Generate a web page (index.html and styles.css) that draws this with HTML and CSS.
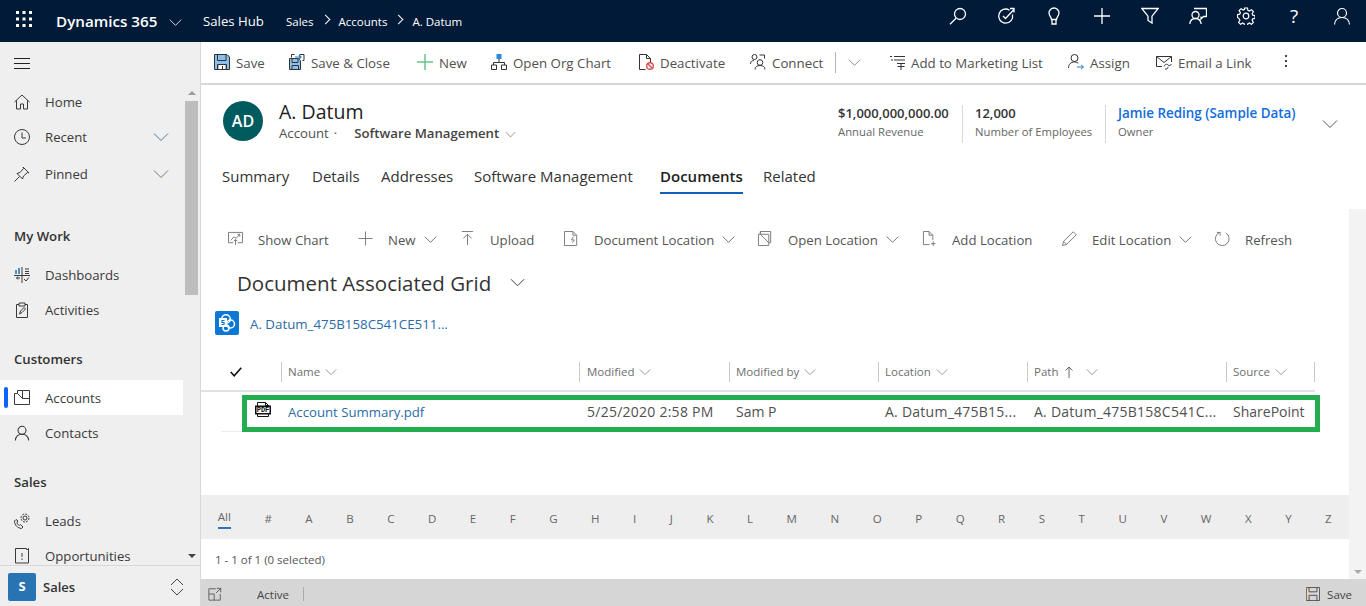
FILE: index.html
```html
<!doctype html>
<html lang="en">
<head>
    <meta charset="UTF-8">
    <title>A. Datum - Dynamics 365</title>
    <link rel="stylesheet" href="styles.css">
</head>
<body>

<svg class="sprite" xmlns="http://www.w3.org/2000/svg">
    <symbol id="chev" viewBox="0 0 16 16"><path d="M1 4.500l7 7 7-7" fill="none" stroke="currentColor"/></symbol>
    <symbol id="waffle" viewBox="0 0 16 16"><path d="M0 0h3v3H0zM6.500 0h3v3h-3zM13 0h3v3h-3zM0 6.500h3v3H0zM6.500 6.500h3v3h-3zM13 6.500h3v3h-3zM0 13h3v3H0zM6.500 13h3v3h-3zM13 13h3v3h-3z" fill="currentColor"/></symbol>
    <symbol id="search" viewBox="0 0 18 18"><g fill="none" stroke="currentColor" stroke-width="1.300"><circle cx="11" cy="7" r="5.500"/><path d="M7 11.200L1 17.200"/></g></symbol>
    <symbol id="task" viewBox="0 0 18 18"><g fill="none" stroke="currentColor" stroke-width="1.300"><path d="M12.500 3.200A7 7 0 1 0 15.500 7.500"/><path d="M6 9l2.500 2.500L17 2.500M13 1.500h4v4"/></g></symbol>
    <symbol id="bulb" viewBox="0 0 18 18"><g fill="none" stroke="currentColor" stroke-width="1.300"><path d="M6.500 12.500C6.500 10 4 9 4 6a5 5 0 0 1 10 0c0 3-2.500 4-2.500 6.500zM7 12.500v4.500h4v-4.500"/></g></symbol>
    <symbol id="plus" viewBox="0 0 18 18"><path d="M9 1v16M1 9h16" fill="none" stroke="currentColor" stroke-width="1.300"/></symbol>
    <symbol id="funnel" viewBox="0 0 18 18"><path d="M.8 1.500h16.400L11 9.200V16l-4-2.500V9.200z" fill="none" stroke="currentColor" stroke-width="1.300"/></symbol>
    <symbol id="assistant" viewBox="0 0 18 18"><g fill="none" stroke="currentColor" stroke-width="1.300"><circle cx="6.500" cy="8" r="3.500"/><path d="M.8 17c.3-3.500 2.700-5.500 5.700-5.500s5.200 2 5.700 5.500M5 1.500h12.500v8h-3l-2.500 2.500V9.500"/></g></symbol>
    <symbol id="gear" viewBox="0 0 18 18"><g fill="none" stroke="currentColor" stroke-width="1.200"><circle cx="9" cy="9" r="2.800"/><path d="M7.500 1h3l.4 2.300 1.500.7 2-1.300 2 2-1.300 2 .7 1.500 2.200.4v2.800l-2.200.4-.7 1.500 1.300 2-2 2-2-1.300-1.500.7-.4 2.200h-3l-.4-2.200-1.500-.7-2 1.300-2-2 1.300-2-.7-1.500L.5 10.400V7.600l2.200-.4.7-1.500-1.300-2 2-2 2 1.300 1.500-.7z"/></g></symbol>
    <symbol id="person" viewBox="0 0 18 18"><g fill="none" stroke="currentColor" stroke-width="1.200"><circle cx="9" cy="6" r="4.500"/><path d="M1.500 17.500c.4-4.500 3.500-7 7.500-7s7.100 2.500 7.500 7"/></g></symbol>
    <symbol id="home" viewBox="0 0 16 16"><path d="M.5 8L8 1l7.500 7M2.500 6.500v8.500h4v-5h3v5h4V6.500" fill="none" stroke="currentColor"/></symbol>
    <symbol id="clock" viewBox="0 0 16 16"><g fill="none" stroke="currentColor"><circle cx="8" cy="8" r="7.500"/><path d="M8 3.500V9h4"/></g></symbol>
    <symbol id="pin" viewBox="0 0 16 16"><path d="M.5 15.500l5-5M3 7.500l3-1 3.500-4 -.5-1.500 6 6-1.500-.5-4 3.500-1 3z" fill="none" stroke="currentColor"/></symbol>
    <symbol id="dash" viewBox="0 0 16 16"><g fill="none" stroke="currentColor"><path d="M0 8.500h16M8 0v16"/><path d="M11 2h4M11 4.500h4M11 6.500h4M10 12l2 2 3-3.500" /></g><path d="M1 3h2v4H1zM4 1h2v6H4z" fill="#4a90c8"/><path d="M6 11H2.500l1.500-1.500M2.500 11L4 12.500" fill="none" stroke="currentColor"/></symbol>
    <symbol id="clipboard" viewBox="0 0 16 16"><g fill="none" stroke="currentColor"><path d="M5 2.500H2.500v13h11v-13H11M5 1h6v3H5zM5.500 12l1-3L10 5.500l1.500 1.500L8 10.500z"/></g></symbol>
    <symbol id="account" viewBox="0 0 16 16"><path d="M.5 3.500h3l5 5v-8h7v14H.5zM3.500 .5h5M3.500 .5v3M8.500 8.500h7" fill="none" stroke="currentColor"/></symbol>
    <symbol id="leads" viewBox="0 0 16 16"><g fill="none" stroke="currentColor"><path d="M2 6.500L.5 8c0 4 3 7 7 7.500L9 14l-2.500-2.500-1 1C4 12 3 10.500 3 9l1-1z"/><circle cx="11" cy="5" r="2"/><circle cx="11" cy="5" r="4" stroke-dasharray="2 1.100"/></g></symbol>
    <symbol id="opportunity" viewBox="0 0 16 16"><path d="M1.500.5h11v1h2v-1 14.500h-13zM8 5v4M8 10.500v1.500" fill="none" stroke="currentColor"/></symbol>
    <symbol id="updown" viewBox="0 0 16 16"><path d="M2 6l6-6 6 6M2 10l6 6 6-6" fill="none" stroke="currentColor"/></symbol>
    <symbol id="save" viewBox="0 0 16 16"><path d="M1 1h14v14H1z" fill="#8cc0ea"/><path d="M5 11h6v4H5z" fill="#fff"/><path d="M.5.500h12.500l2.500 2.500v12.500H.5zM3.500 .5v6h8.500v-6M3.500 15.500v-5h9v5M8.500 12v3.500" fill="none" stroke="#333"/></symbol>
    <symbol id="saveclose" viewBox="0 0 16 16"><path d="M1 5h10v10H1z" fill="#8cc0ea"/><path d="M.5 4.500h9l2 2v9H.5zM3 4.500v4h6v-4M3 15.500v-4h6.500v4" fill="none" stroke="#333"/><path d="M5.500 .5h-3v3M10.500 .5h4.500v6h-1.500" fill="none" stroke="#333"/><path d="M6 3h6M10 1l2 2-2 2" fill="none" stroke="#2a79c4" stroke-width="1.200"/></symbol>
    <symbol id="neww" viewBox="0 0 16 16"><path d="M8 0v16M0 8h16" stroke="#67c68c" stroke-width="1.500"/></symbol>
    <symbol id="org" viewBox="0 0 16 16"><path d="M5.500 0h5v5h-5z" fill="#2b88d8"/><path d="M8 5v3.500M2.500 11V8.500h11V11M.5 11h5v4.500h-5zM10.500 11h5v4.500h-5z" fill="none" stroke="#333"/></symbol>
    <symbol id="deact" viewBox="0 0 16 16"><path d="M7.500 15.500H1.500V.5h7l4 4v4.500M8.500.5v4h4" fill="none" stroke="#333"/><circle cx="12" cy="12" r="3.300" fill="none" stroke="#d9534f" stroke-width="1.400"/><path d="M9.800 9.800l4.400 4.400" stroke="#d9534f" stroke-width="1.400"/></symbol>
    <symbol id="connect" viewBox="0 0 16 16"><g fill="none" stroke="#333"><circle cx="4.500" cy="3" r="2.500"/><circle cx="10" cy="8.500" r="2.800"/><path d="M.5 10c0-2 1-3.500 3.500-3.500M5 15.500c0-2.500 2-4 5-4s5 1.500 5 4M9.500 1h5v3.500"/></g></symbol>
    <symbol id="addlist" viewBox="0 0 16 16"><path d="M5 2.500h11M5 6h11M8 9.500h8M12 9v7M8.500 12.500h7M1 2.500h2M2 6h2" fill="none" stroke="#333"/></symbol>
    <symbol id="assign" viewBox="0 0 16 16"><g fill="none" stroke="#333"><circle cx="6.500" cy="4" r="3.500"/><path d="M.5 14c0-4 2.500-6 6-6 1.500 0 2.800.4 3.800 1.200"/></g><path d="M9 13h6.500M13 10.800l2.400 2.200-2.400 2.200" fill="none" stroke="#2a79c4"/></symbol>
    <symbol id="email" viewBox="0 0 16 16"><g fill="none" stroke="#333"><path d="M6 12.500H.5V2.500h15V8M.5 2.500L8 8.500l7.500-6"/><path d="M8 12.500c1-2.500 3-3 4-1.500s3 0 3.500-1M9 15c1.500.5 3-.5 3-2" /></g></symbol>
    <symbol id="chart" viewBox="0 0 16 16"><path d="M5.500 12.500h-5v-11h15v11h-5M3 10l3.500-4 2 2 4-4.500M10 3.500h2.500V6M8 15V9M6 11l2-2 2 2" fill="none" stroke="currentColor"/></symbol>
    <symbol id="thinplus" viewBox="0 0 16 16"><path d="M8 .5v15M.5 8h15" fill="none" stroke="currentColor"/></symbol>
    <symbol id="upload" viewBox="0 0 16 16"><path d="M2 .5h12M8 15V3.500M3.500 8L8 3.500 12.500 8" fill="none" stroke="currentColor"/></symbol>
    <symbol id="docloc" viewBox="0 0 16 16"><path d="M.5.500h9l4 4v11H.5zM9.500.5v4h4M10 6l-2 3.500h3l-2 3" fill="none" stroke="currentColor"/></symbol>
    <symbol id="openloc" viewBox="0 0 16 16"><path d="M.5 3.500h2v-3h11v12h-2v3H.5zM2.500 3.500l9 9M11.500 3.500v9M2.500 .5v3h9" fill="none" stroke="currentColor"/></symbol>
    <symbol id="addloc" viewBox="0 0 16 16"><path d="M8 14.500H1.500V.5h6l4 4v5M7.500.5v4h4M12 11v5M9.500 13.500h5" fill="none" stroke="currentColor"/></symbol>
    <symbol id="pencil" viewBox="0 0 16 16"><path d="M.5 15.500l1.200-4.500L12 .8 15.200 4 5 14.300zM1.700 11L5 14.300" fill="none" stroke="currentColor"/></symbol>
    <symbol id="refresh" viewBox="0 0 16 16"><path d="M5 1.500A7.300 7.300 0 1 0 11.500 2M5.500 5V1.500H2" fill="none" stroke="currentColor"/></symbol>
    <symbol id="check" viewBox="0 0 12 10"><path d="M.7 5l3.500 3.800L11.300.8" fill="none" stroke="currentColor" stroke-width="1.600"/></symbol>
    <symbol id="sortup" viewBox="0 0 10 12"><path d="M5 12V1M1.500 4.500L5 1l3.500 3.500" fill="none" stroke="currentColor"/></symbol>
    <symbol id="sharepoint" viewBox="0 0 24 24"><rect width="24" height="24" rx="2" fill="#0d78d4"/><circle cx="11" cy="8" r="4.300" fill="none" stroke="#fff" stroke-width="1.500"/><circle cx="15.500" cy="13" r="4" fill="none" stroke="#fff" stroke-width="1.500"/><circle cx="11" cy="17" r="3" fill="none" stroke="#fff" stroke-width="1.500"/><path d="M4 7h8v9H4z" fill="#fff"/><path d="M9.500 9.500H7v2h2v2H6.500" fill="none" stroke="#0d78d4" stroke-width="1.200"/></symbol>
    <symbol id="expand" viewBox="0 0 16 16"><path d="M9 2H1v13h13V8M1 8h6v7M9 7l5.500-5.500M10 1.500h4.500V6" fill="none" stroke="currentColor"/></symbol>
    <symbol id="savesmall" viewBox="0 0 16 16"><path d="M.5.500h15v15H.5zM3.500.5v5h9v-5M3.500 15.500v-6h9v6" fill="none" stroke="#444"/><path d="M.5.500v15" stroke="#a9752c"/></symbol>
</svg>

<header class="topbar">
    <svg class="waffle"><use href="#waffle"/></svg>
    <span class="brand">Dynamics 365</span>
    <svg class="brand-chev"><use href="#chev"/></svg>
    <span class="app-name">Sales Hub</span>
    <nav class="crumbs">
        <span>Sales</span><i class="crumb-sep"></i>
        <span>Accounts</span><i class="crumb-sep"></i>
        <span>A. Datum</span>
    </nav>
    <div class="top-icons">
        <span class="top-icon"><svg><use href="#search"/></svg></span>
        <span class="top-icon"><svg><use href="#task"/></svg></span>
        <span class="top-icon"><svg><use href="#bulb"/></svg></span>
        <span class="top-icon"><svg><use href="#plus"/></svg></span>
        <span class="top-icon"><svg><use href="#funnel"/></svg></span>
        <span class="top-icon"><svg><use href="#assistant"/></svg></span>
        <span class="top-icon"><svg><use href="#gear"/></svg></span>
        <span class="top-icon help">?</span>
        <span class="top-icon"><svg><use href="#person"/></svg></span>
    </div>
</header>

<div class="app">

    <aside class="sidebar">
        <div class="burger"><i></i><i></i><i></i></div>
        <div class="side-scroll">
            <nav class="side-list">
                <a class="side-item home-row"><svg><use href="#home"/></svg>Home</a>
                <a class="side-item recent-row"><svg><use href="#clock"/></svg>Recent<svg class="side-chev recent-chev"><use href="#chev"/></svg></a>
                <a class="side-item pinned-row"><svg><use href="#pin"/></svg>Pinned<svg class="side-chev pinned-chev"><use href="#chev"/></svg></a>

                <h3 class="side-head first">My Work</h3>
                <a class="side-item"><svg><use href="#dash"/></svg>Dashboards</a>
                <a class="side-item"><svg><use href="#clipboard"/></svg>Activities</a>

                <h3 class="side-head">Customers</h3>
                <a class="side-item active"><svg><use href="#account"/></svg>Accounts</a>
                <a class="side-item"><svg><use href="#person"/></svg>Contacts</a>

                <h3 class="side-head">Sales</h3>
                <a class="side-item"><svg><use href="#leads"/></svg>Leads</a>
                <a class="side-item"><svg><use href="#opportunity"/></svg>Opportunities</a>
            </nav>
            <div class="side-bar">
                <i class="arrow-up"></i>
                <i class="side-thumb"></i>
                <i class="arrow-down"></i>
            </div>
        </div>
        <div class="area-switch">
            <span class="area-tile">S</span>
            <span class="area-name">Sales</span>
            <svg class="area-arrows"><use href="#updown"/></svg>
        </div>
    </aside>

    <main class="main">

        <div class="commands">
            <a class="cmd"><svg><use href="#save"/></svg>Save</a>
            <a class="cmd"><svg><use href="#saveclose"/></svg>Save &amp; Close</a>
            <a class="cmd"><svg><use href="#neww"/></svg>New</a>
            <a class="cmd"><svg><use href="#org"/></svg>Open Org Chart</a>
            <a class="cmd"><svg><use href="#deact"/></svg>Deactivate</a>
            <a class="cmd"><svg><use href="#connect"/></svg>Connect</a>
            <a class="cmd cmd-split"><svg class="cmd-chev"><use href="#chev"/></svg></a>
            <a class="cmd"><svg><use href="#addlist"/></svg>Add to Marketing List</a>
            <a class="cmd"><svg><use href="#assign"/></svg>Assign</a>
            <a class="cmd"><svg><use href="#email"/></svg>Email a Link</a>
            <a class="cmd-more"><i></i><i></i><i></i></a>
        </div>

        <section class="record">
            <div class="avatar">AD</div>
            <div class="record-title">
                <h1>A. Datum</h1>
                <p><span>Account</span><span class="dot">·</span><b>Software Management</b><svg class="form-chev"><use href="#chev"/></svg></p>
            </div>
            <div class="kpis">
                <div class="kpi kpi-money"><strong>$1,000,000,000.00</strong><span>Annual Revenue</span></div>
                <div class="kpi kpi-staff"><strong>12,000</strong><span>Number of Employees</span></div>
                <div class="kpi kpi-owner"><strong class="owner">Jamie Reding (Sample Data)</strong><span>Owner</span></div>
            </div>
            <svg class="record-chev"><use href="#chev"/></svg>
        </section>

        <nav class="tabs">
            <a>Summary</a>
            <a>Details</a>
            <a>Addresses</a>
            <a>Software Management</a>
            <a class="tab-on"><span>Documents</span></a>
            <a>Related</a>
        </nav>

        <section class="content">
            <div class="pane">
                <div class="grid-tools">
                    <a class="tool"><svg><use href="#chart"/></svg><span>Show Chart</span></a>
                    <a class="tool"><svg><use href="#thinplus"/></svg><span>New</span><svg class="tool-chev"><use href="#chev"/></svg></a>
                    <a class="tool"><svg><use href="#upload"/></svg><span>Upload</span></a>
                    <a class="tool"><svg><use href="#docloc"/></svg><span>Document Location</span><svg class="tool-chev"><use href="#chev"/></svg></a>
                    <a class="tool"><svg><use href="#openloc"/></svg><span>Open Location</span><svg class="tool-chev"><use href="#chev"/></svg></a>
                    <a class="tool"><svg><use href="#addloc"/></svg><span>Add Location</span></a>
                    <a class="tool"><svg><use href="#pencil"/></svg><span>Edit Location</span><svg class="tool-chev"><use href="#chev"/></svg></a>
                    <a class="tool"><svg><use href="#refresh"/></svg><span>Refresh</span></a>
                </div>

                <div class="view-title">
                    <h2>Document Associated Grid</h2>
                    <svg><use href="#chev"/></svg>
                </div>

                <div class="site-link">
                    <svg><use href="#sharepoint"/></svg>
                    <a>A. Datum_475B158C541CE511...</a>
                </div>

                <div class="list-head">
                    <div class="list-check"><svg><use href="#check"/></svg></div>
                    <div class="col">Name<svg><use href="#chev"/></svg></div>
                    <div class="col col-date">Modified<svg><use href="#chev"/></svg></div>
                    <div class="col">Modified by<svg><use href="#chev"/></svg></div>
                    <div class="col">Location<svg><use href="#chev"/></svg></div>
                    <div class="col">Path<svg class="sort-up"><use href="#sortup"/></svg><svg class="path-chev"><use href="#chev"/></svg></div>
                    <div class="col col-last">Source<svg><use href="#chev"/></svg></div>
                </div>

                <div class="list-row">
                    <div class="file-icon">
                        <svg width="16" height="15" viewBox="0 0 16 15"><path d="M2.500 4V.5h8l3 3V4M10.500.5v3h3M2.500 12v2.500h11V12" fill="none" stroke="#111"/><rect x=".75" y="4.250" width="14.500" height="7.500" fill="#fff" stroke="#111" stroke-width="1.500"/></svg>
                        <b>PDF</b>
                    </div>
                    <a class="cell file-name">Account Summary.pdf</a>
                    <div class="cell cell-date">5/25/2020 2:58 PM</div>
                    <div class="cell">Sam P</div>
                    <div class="cell cell-long">A. Datum_475B15...</div>
                    <div class="cell cell-long">A. Datum_475B158C541C...</div>
                    <div class="cell">SharePoint</div>
                    <div class="highlight"></div>
                </div>

                <div class="pane-fill"></div>

                <div class="jump">
                    <a class="jump-on"><span>All</span></a>
                    <a>#</a><a>A</a><a>B</a><a>C</a><a>D</a><a>E</a><a>F</a><a>G</a><a>H</a><a>I</a><a>J</a><a>K</a><a>L</a><a>M</a><a>N</a><a>O</a><a>P</a><a>Q</a><a>R</a><a>S</a><a>T</a><a>U</a><a>V</a><a>W</a><a>X</a><a>Y</a><a>Z</a>
                </div>
                <div class="count">1 - 1 of 1 (0 selected)</div>
            </div>
            <div class="pane-bar"><i class="arrow-down"></i></div>
        </section>

        <footer class="status">
            <svg class="status-expand"><use href="#expand"/></svg>
            <span class="status-text">Active</span>
            <i class="status-sep"></i>
            <svg class="status-save"><use href="#savesmall"/></svg>
            <span class="status-savetext">Save</span>
        </footer>

    </main>
</div>

</body>
</html>
```

FILE: styles.css
```css
html,body{
    margin:0;
    padding:0;
    height:100%;
    overflow:hidden;
}
body{
    display:flex;
    flex-direction:column;
    font-family:"Open Sans","Noto Sans",sans-serif;
    font-size:13px;
    color:#333;
}
a{
    color:inherit;
    text-decoration:none;
}
i{
    font-style:normal;
}
.sprite{
    display:none;
}

/* top bar */
.topbar{
    height:42px;
    flex:none;
    display:flex;
    align-items:center;
    background:#001a38;
    color:#fff;
    white-space:nowrap;
}
.waffle{
    width:16px;
    height:16px;
    margin:-5px 24px 0 16px;
}
.brand{
    font-size:15.200px;
    font-weight:600;
    width:101px;
}
.brand-chev{
    width:13px;
    height:13px;
    margin:2px 21px 0 12px;
}
.app-name{
    font-size:13.200px;
    width:83px;
}
.crumbs{
    display:flex;
    align-items:center;
    font-size:11.500px;
}
.crumb-sep{
    width:6px;
    height:6px;
    border-top:1px solid #fff;
    border-right:1px solid #fff;
    transform:rotate(45deg);
    margin:-3px 10px 0 8px;
}
.top-icons{
    margin-left:auto;
    display:flex;
}
.top-icon{
    width:48px;
    height:32px;
    margin-top:-10px;
    display:flex;
    align-items:center;
    justify-content:center;
}
.top-icon svg{
    width:18px;
    height:18px;
}
.help{
    font-size:19px;
}

.app{
    flex:1;
    display:flex;
    min-height:0;
}

/* left nav */
.sidebar{
    width:200px;
    flex:none;
    display:flex;
    flex-direction:column;
    background:#efefef;
    border-right:1px solid #d8d8d8;
}
.burger{
    height:43px;
    flex:none;
    padding-left:14px;
    display:flex;
    flex-direction:column;
    justify-content:center;
    gap:4px;
}
.burger i{
    width:16px;
    height:1px;
    background:#222;
}
.side-scroll{
    flex:1;
    min-height:0;
    display:flex;
    overflow:hidden;
}
.side-list{
    width:183px;
    flex:none;
}
.side-item{
    height:35px;
    display:flex;
    align-items:center;
    padding-left:14px;
    gap:15px;
    font-size:13.200px;
    white-space:nowrap;
    color:#3a3a3a;
}
.side-item svg{
    width:16px;
    height:16px;
    flex:none;
}
.home-row{
    height:34px;
}
.recent-row{
    height:36px;
}
.pinned-row{
    height:38px;
}
.side-item .side-chev{
    margin-left:auto;
    margin-right:14px;
}
.recent-chev{
    color:#4f7b98;
}
.pinned-chev{
    color:#8c7657;
}
.side-head{
    height:34px;
    line-height:34px;
    margin:15px 0 4px;
    padding-left:14px;
    font-size:13.200px;
    font-weight:600;
    color:#333;
}
.side-head.first{
    margin-top:26px;
}
.active{
    position:relative;
    background:#fff;
}
.active::before{
    content:"";
    position:absolute;
    left:4px;
    top:7px;
    width:4px;
    height:21px;
    border-radius:2px;
    background:#0f62fe;
}
.side-bar{
    width:13px;
    margin-left:2px;
    display:flex;
    flex-direction:column;
    align-items:center;
}
.arrow-up{
    width:0;
    height:0;
    margin:6px 0 6px;
    border:4px solid transparent;
    border-top:0;
    border-bottom:4px solid #9a9a9a;
}
.side-thumb{
    width:13px;
    height:194px;
    flex:none;
    background:#bdbdbd;
}
.arrow-down{
    width:0;
    height:0;
    margin-top:auto;
    margin-bottom:7px;
    border:4px solid transparent;
    border-bottom:0;
    border-top:4px solid #444;
}
.area-switch{
    height:41px;
    flex:none;
    display:flex;
    align-items:center;
    padding:2px 0 0 8px;
    border-top:1px solid #d8d8d8;
    box-sizing:border-box;
}
.area-tile{
    width:28px;
    height:28px;
    line-height:26px;
    border-radius:2px;
    background:#2a73b2;
    color:#fff;
    text-align:center;
    font-weight:700;
    font-size:13px;
}
.area-name{
    margin-left:7px;
    font-weight:600;
    font-size:13px;
    color:#333;
}
.area-arrows{
    width:16px;
    height:16px;
    margin-left:auto;
    margin-right:15px;
    color:#444;
}

/* main column */
.main{
    flex:1;
    min-width:0;
    display:flex;
    flex-direction:column;
}
.commands{
    height:41px;
    flex:none;
    display:grid;
    grid-template-columns:75px 128px 74px 147px 112px 85px 54px 179px 88px 124px 12px;
    padding-left:13px;
    align-items:center;
    border-bottom:2px solid #d8d8d8;
    font-size:13.300px;
    color:#505050;
    white-space:nowrap;
}
.cmd{
    display:flex;
    align-items:center;
    gap:6px;
    padding-top:1px;
}
.cmd svg{
    width:16px;
    height:16px;
    flex:none;
    margin-top:-3px;
}
.cmd-split{
    height:21px;
    padding:0;
    border-left:1px solid #b4b4b4;
    box-sizing:border-box;
    padding-left:12px;
}
.cmd .cmd-chev{
    width:13px;
    height:13px;
    margin-top:0;
    color:#777;
}
.cmd-more{
    display:flex;
    flex-direction:column;
    gap:3px;
    align-items:center;
    margin-top:-3px;
}
.cmd-more i{
    width:2px;
    height:2px;
    background:#444;
}

/* record header */
.record{
    height:80px;
    flex:none;
    display:flex;
    padding:16px 0 0 22px;
    box-sizing:border-box;
}
.avatar{
    width:40px;
    height:40px;
    border-radius:50%;
    background:#005b5e;
    color:#fff;
    font-size:16px;
    font-weight:600;
    line-height:40px;
    text-align:center;
    flex:none;
}
.record-title{
    margin-left:16px;
    width:559px;
    flex:none;
}
.record-title h1{
    margin:-1px 0 0;
    font-size:19.500px;
    line-height:23px;
    font-weight:500;
    color:#222;
}
.record-title p{
    margin:0;
    height:20px;
    line-height:19px;
    display:flex;
    align-items:center;
    font-size:13.200px;
    color:#505050;
}
.dot{
    margin:0 17px 0 5px;
}
.record-title b{
    font-weight:600;
    color:#444;
}
.form-chev{
    width:11px;
    height:11px;
    margin:2px 0 0 6px;
    color:#666;
}
.kpis{
    display:flex;
    margin-top:4px;
    height:38px;
}
.kpi{
    display:flex;
    flex-direction:column;
    white-space:nowrap;
}
.kpi strong{
    font-size:13px;
    font-weight:600;
    line-height:17px;
    color:#333;
}
.kpi span{
    margin-top:1px;
    font-size:11.300px;
    line-height:17px;
    color:#666;
}
.kpi-money{
    width:124px;
}
.kpi-staff,.kpi-owner{
    border-left:1px solid #d8d8d8;
    padding-left:12px;
}
.kpi-staff{
    width:130px;
}
.kpi-owner{
    width:208px;
}
.kpi .owner{
    font-size:13.400px;
    color:#0f6cde;
}
.record-chev{
    width:16px;
    height:16px;
    margin:15px 0 0 -4px;
    color:#555;
}

/* tabs */
.tabs{
    height:29px;
    flex:none;
    display:grid;
    grid-template-columns:90px 69px 93px 186px 103px 80px;
    padding-left:21px;
    font-size:15px;
    line-height:23px;
    color:#333;
    white-space:nowrap;
}
.tab-on span{
    display:inline-block;
    height:27px;
    border-bottom:2px solid #1160b7;
    font-weight:600;
    color:#222;
}

/* documents area */
.content{
    flex:1;
    min-height:0;
    margin-top:15px;
    display:flex;
}
.pane{
    flex:1;
    min-width:0;
    display:flex;
    flex-direction:column;
    position:relative;
}
.pane-bar{
    width:17px;
    flex:none;
    background:#f3f3f3;
    display:flex;
    flex-direction:column;
    align-items:center;
}
.pane-bar .arrow-down{
    border-top-color:#aaa;
    margin-bottom:5px;
}
.grid-tools{
    height:31px;
    margin-top:15px;
    flex:none;
    display:grid;
    grid-template-columns:130px 102px 104px 194px 164px 140px 153px 90px;
    padding-left:27px;
    align-items:center;
    font-size:13.200px;
    color:#555;
    white-space:nowrap;
}
.tool{
    display:flex;
    align-items:center;
}
.tool svg{
    width:15px;
    height:15px;
    flex:none;
    margin-right:15px;
    margin-top:-3px;
    color:#777;
}
.tool .tool-chev{
    width:13px;
    height:13px;
    margin:0 0 0 8px;
    color:#555;
}
.view-title{
    height:40px;
    margin-top:8px;
    flex:none;
    display:flex;
    align-items:center;
    padding-left:36px;
}
.view-title h2{
    margin:0;
    font-size:20.500px;
    font-weight:500;
    color:#333;
    width:273px;
    white-space:nowrap;
}
.view-title svg{
    width:15px;
    height:15px;
    margin-top:-2px;
    color:#333;
}
.site-link{
    height:24px;
    margin-top:8px;
    flex:none;
    display:flex;
    align-items:center;
    padding-left:14px;
    gap:11px;
    font-size:13.300px;
    color:#2b6ca8;
    white-space:nowrap;
}
.site-link svg{
    width:24px;
    height:24px;
}
.site-link a{
    margin-top:2px;
}
.list-head{
    margin-top:21px;
    height:36px;
    flex:none;
    width:1114px;
    box-sizing:border-box;
    padding:6px 0 8px 20px;
    display:grid;
    grid-template-columns:60px 298px 150px 149px 149px 199px 89px;
    border-bottom:2px solid #e1e1e1;
    font-size:11.500px;
    color:#6e6e6e;
}
.list-check{
    display:flex;
    align-items:center;
    padding-left:9px;
    color:#111;
}
.list-check svg{
    width:12px;
    height:10px;
}
.col{
    display:flex;
    align-items:center;
    border-left:1px solid #c8c8c8;
    padding:0 0 1px 6px;
    white-space:nowrap;
}
.col-date{
    padding-left:7px;
}
.col svg{
    width:12px;
    height:12px;
    margin-left:5px;
    color:#777;
}
.col-last{
    border-right:1px solid #c8c8c8;
}
.col .sort-up{
    width:10px;
    margin-left:6px;
    color:#666;
}
.col .path-chev{
    margin-left:12px;
}
.list-row{
    position:relative;
    height:40px;
    flex:none;
    width:1094px;
    margin-left:20px;
    box-sizing:border-box;
    border-bottom:1px solid #ebebeb;
    display:grid;
    grid-template-columns:60px 298px 150px 149px 149px 199px 89px;
    align-items:center;
    font-size:14px;
    color:#505050;
    white-space:nowrap;
}
.cell{
    padding-left:7px;
}
.file-name{
    font-size:13.200px;
    color:#2b6ca8;
}
.cell-date{
    padding-left:8px;
    letter-spacing:.25px;
}
.cell-long{
    letter-spacing:.25px;
}
.file-icon{
    position:relative;
    width:16px;
    height:15px;
    margin:-5px 0 0 34px;
    color:#111;
}
.file-icon svg{
    display:block;
}
.file-icon b{
    position:absolute;
    left:1px;
    top:4px;
    width:14px;
    text-align:center;
    font:700 7px/8px "Liberation Mono",monospace;
}
.highlight{
    position:absolute;
    left:21px;
    top:3px;
    width:1078px;
    height:37px;
    box-sizing:border-box;
    border:5px solid #22ad50;
}
.pane-fill{
    flex:1;
}
.jump{
    height:44px;
    flex:none;
    background:#eee;
    display:flex;
    align-items:center;
    font-size:11.500px;
    color:#666;
}
.jump a{
    padding:0 16.770px;
    margin-top:2px;
}
.jump-on span{
    display:inline-block;
    height:18px;
    border-bottom:2px solid #2f74b5;
}
.jump a.jump-on{
    margin-top:3px;
}
.count{
    height:40px;
    flex:none;
    box-sizing:border-box;
    padding:13px 0 0 14px;
    font-size:11.500px;
    color:#555;
}

/* status bar */
.status{
    height:27px;
    flex:none;
    background:#d6d6d6;
    display:flex;
    align-items:center;
    font-size:11.500px;
    color:#444;
    padding-top:3px;
    box-sizing:border-box;
}
.status-expand{
    width:14px;
    height:14px;
    margin-left:7px;
    color:#555;
}
.status-text{
    margin-left:35px;
    width:46px;
}
.status-sep{
    width:1px;
    height:14px;
    background:#aaa;
}
.status-save{
    width:14px;
    height:14px;
    margin-left:auto;
}
.status-savetext{
    margin:0 14px 0 7px;
}
```
